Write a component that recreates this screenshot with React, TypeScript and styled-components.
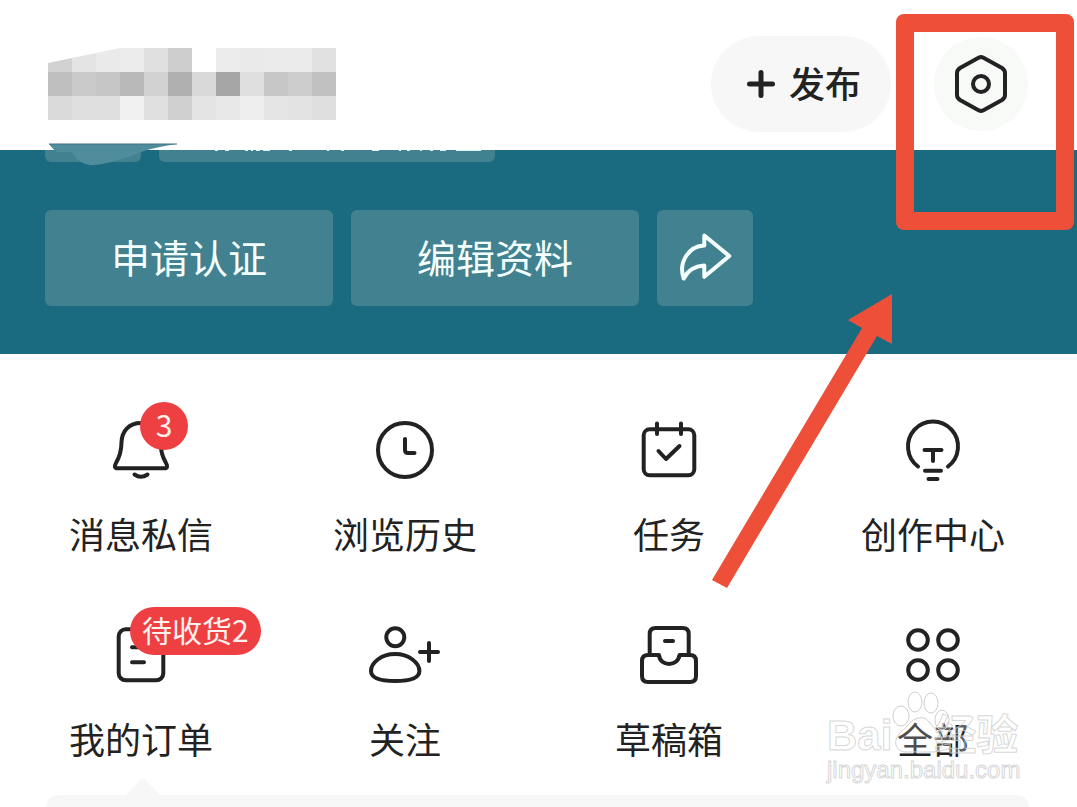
import React from 'react';
import styled, { createGlobalStyle } from 'styled-components';

const INK = '#222222';
const TEAL = '#1b6b80';
const TILE = '#42818f';
const RED = '#ee4043';
const MARK = '#ed4f39';

const GlobalStyle = createGlobalStyle`
  * { box-sizing: border-box; }
  body {
    margin: 0;
    background: #ffffff;
    color: ${INK};
    font-family: 'Noto Sans CJK SC', 'Noto Sans', sans-serif;
  }
  button { font: inherit; color: inherit; border: 0; margin: 0; padding: 0; cursor: pointer; }
`;

const Page = styled.main`
  position: relative;
  display: flex;
  flex-direction: column;
  min-height: 100vh;
  overflow: hidden;
`;

const Header = styled.header`
  display: flex;
  align-items: center;
  gap: 43px;
  padding: 36px 49px 18px 48px;
`;

const HiddenName = styled.svg`
  display: block;
  width: 288px;
  height: 72px;
  margin-right: auto;
`;

const PublishButton = styled.button`
  display: flex;
  align-items: center;
  gap: 14px;
  height: 96px;
  padding: 0 30px 0 36px;
  border-radius: 48px;
  background: #f7f7f7;
  font-size: 36px;
  line-height: 42px;
  font-weight: 500;
`;

const ButtonText = styled.span`
  display: block;
  padding-bottom: 4px;
`;

const SettingsButton = styled.button`
  display: grid;
  place-items: center;
  width: 94px;
  height: 94px;
  border-radius: 50%;
  background: #f8faf8;
`;

const Profile = styled.section`
  padding: 0 45px 48px;
  background: ${TEAL};
`;

const TagRow = styled.div`
  display: flex;
  gap: 18px;
  margin-bottom: 48px;
`;

const Tag = styled.div<{ $width: number }>`
  width: ${(p) => p.$width}px;
  height: 12px;
  border-radius: 0 0 6px 6px;
  background: ${TILE};
`;

const TagText = styled.svg`
  display: block;
  width: 100%;
  height: 2px;
`;

const Actions = styled.div`
  display: flex;
  gap: 18px;
`;

const ActionButton = styled.button<{ $square?: boolean }>`
  display: grid;
  place-items: center;
  width: ${(p) => (p.$square ? 96 : 288)}px;
  height: 96px;
  border-radius: 6px;
  background: ${TILE};
  color: #f4ffff;
  font-size: 39px;
  line-height: 42px;
`;

const Menu = styled.nav`
  display: grid;
  grid-template-columns: repeat(4, 1fr);
  row-gap: 65px;
  padding: 60px 12px 36px 9px;
`;

const MenuItem = styled.button`
  display: flex;
  flex-direction: column;
  align-items: center;
  gap: 26px;
  background: none;
  font-size: 36px;
  line-height: 42px;
`;

const IconSlot = styled.span`
  position: relative;
  display: block;
  width: 72px;
  height: 72px;
`;

const Badge = styled.span<{ $left: number }>`
  position: absolute;
  top: -12px;
  left: ${(p) => p.$left}px;
  min-width: 48px;
  padding: 0 12px 4px;
  border-radius: 24px;
  background: ${RED};
  color: #fff1ee;
  font-size: 30px;
  line-height: 44px;
  text-align: center;
  white-space: nowrap;
`;

const Card = styled.section`
  position: relative;
  flex: 1;
  min-height: 12px;
  margin: 0 48px 0 46px;
  border-radius: 18px 18px 0 0;
  background: #f7f7f7;
`;

const CardPointer = styled.svg`
  position: absolute;
  left: 80px;
  bottom: 100%;
  width: 34px;
  height: 17px;
`;

const Smudge = styled.svg`
  position: absolute;
  left: 45px;
  top: 143px;
  width: 140px;
  height: 24px;
`;

const HighlightBox = styled.div`
  position: absolute;
  top: 14px;
  right: 3px;
  width: 178px;
  height: 216px;
  border: 18px solid ${MARK};
  border-radius: 8px;
  pointer-events: none;
`;

const Arrow = styled.svg`
  position: absolute;
  top: 290px;
  right: 177px;
  width: 190px;
  height: 300px;
  pointer-events: none;
`;

const Watermark = styled.div`
  position: absolute;
  right: 56px;
  top: 690px;
  width: 194px;
  color: rgba(255, 255, 255, 0.3);
  -webkit-text-stroke: 1px rgba(205, 205, 205, 0.8);
  font-family: 'Liberation Sans', 'Noto Sans CJK SC', sans-serif;
  white-space: nowrap;
  pointer-events: none;
`;

const Brand = styled.div`
  display: flex;
  align-items: flex-end;
  height: 66px;
  font-size: 42px;
  line-height: 40px;
  font-weight: 700;
`;

const Paw = styled.svg`
  flex: none;
  width: 58px;
  height: 66px;
  margin-right: -16px;
`;

const Url = styled.div`
  font-size: 24px;
  line-height: 28px;
`;

const Glyph = ({ children, size = 72, width = 4 }: { children: React.ReactNode; size?: number; width?: number }) => (
  <svg
    width={size}
    height={size}
    viewBox={`0 0 ${size} ${size}`}
    fill="none"
    stroke="currentColor"
    strokeWidth={width}
    strokeLinecap="round"
    strokeLinejoin="round"
    display="block"
    aria-hidden="true"
  >
    {children}
  </svg>
);

const icons = {
  bell: (
    <>
      <path d="M36 9C24 9 17 17 16.500 28C16.500 38 14.500 43 11 49Q8 54.300 13 54.300H59Q64 54.300 61 49C57.500 43 55.500 38 55.500 28C55 17 48 9 36 9Z" />
      <path d="M29.500 60.500Q36 65 42.500 60.500" />
    </>
  ),
  clock: (
    <>
      <circle cx="36" cy="36" r="27" />
      <path d="M36 25V36Q36 39 39 39H45.500" />
    </>
  ),
  task: (
    <>
      <rect x="10.700" y="15.300" width="50.600" height="46" rx="6" />
      <path d="M24 9.500V20M48 9.500V20M25.500 37L33 45L46.500 32" />
    </>
  ),
  bulb: (
    <>
      <path d="M21 52.500A25 25 0 1 1 51 52.500" />
      <path d="M27.500 36H44.500M36 36V47M28 56.700H44M31.500 65H40.500" />
    </>
  ),
  order: (
    <>
      <rect x="13.700" y="10.300" width="44.600" height="51" rx="7" />
      <path d="M27 28.300H44M27 43.300H39" />
    </>
  ),
  follow: (
    <>
      <circle cx="26.300" cy="18.300" r="9" />
      <path d="M26.200 35C12 35 2 44 2 52C2 59 12 62 26.200 62S50.400 59 50.400 52C50.400 44 40 35 26.200 35Z" />
      <path d="M51 33H69M60 24V42" />
    </>
  ),
  draft: (
    <>
      <path d="M16.700 35V15Q16.700 9 22.700 9H49.700Q55.700 9 55.700 15V35" />
      <path d="M15 36H26C27 48 45 48 46.500 36H57Q63 36 63 42V57Q63 63 57 63H15Q9 63 9 57V42Q9 36 15 36Z" />
      <path d="M32 22H40" />
    </>
  ),
  all: (
    <>
      <circle cx="21" cy="21" r="9.800" />
      <circle cx="51" cy="21" r="9.800" />
      <circle cx="21" cy="51" r="9.800" />
      <circle cx="51" cy="51" r="9.800" />
    </>
  ),
};

const menu: { label: string; icon: keyof typeof icons; badge?: string; badgeLeft?: number }[] = [
  { label: '消息私信', icon: 'bell', badge: '3', badgeLeft: 35 },
  { label: '浏览历史', icon: 'clock' },
  { label: '任务', icon: 'task' },
  { label: '创作中心', icon: 'bulb' },
  { label: '我的订单', icon: 'order', badge: '待收货2', badgeLeft: 25 },
  { label: '关注', icon: 'follow' },
  { label: '草稿箱', icon: 'draft' },
  { label: '全部', icon: 'all' },
];

// Grey levels of the pixelated user name, one list per row of cells.
const mosaic = [
  ['d2d2d2', 'e4e4e4', 'eaeaea', 'ececec', 'e0e0e0', 'cecece', 'ffffff', 'ececec', 'eaeaea', 'ebebeb', 'ebebeb', 'e1e1e1'],
  ['bfbfbf', 'cacaca', 'c6c6c6', 'b9b9b9', 'd2d2d2', 'b0b0b0', 'd9d9d9', 'a6a6a6', 'dfdfdf', 'c7c7c7', 'cccccc', 'c1c1c1'],
  ['dadada', 'dfdfdf', 'dedede', 'f1f1f1', 'e0e0e0', 'd0d0d0', 'e4e4e4', 'e8e8e8', 'eeeeee', 'e5e5e5', 'e3e3e3', 'dedede'],
];

export default function App() {
  return (
    <Page>
      <GlobalStyle />
      <Header>
        <HiddenName viewBox="0 0 288 72" shapeRendering="crispEdges" aria-hidden="true">
          {mosaic.map((row, y) =>
            row.map((tone, x) => (
              <rect key={`${x}-${y}`} x={x * 24} y={y * 24} width="24" height="24" fill={`#${tone}`} />
            )),
          )}
          <path d="M0 0H72L0 15Z" fill="#ffffff" shapeRendering="auto" />
        </HiddenName>
        <PublishButton type="button">
          <Glyph size={28} width={5}>
            <path d="M2.500 14H25.500M14 2.500V25.500" />
          </Glyph>
          <ButtonText>发布</ButtonText>
        </PublishButton>
        <SettingsButton type="button" aria-label="设置">
          <Glyph>
            <path d="M38 9.600L57 20Q60 22 60 25V47Q60 50 57 52L38 62.400Q36 63.400 34 62.400L15 52Q12 50 12 47V25Q12 22 15 20L34 9.600Q36 8.600 38 9.600Z" />
            <circle cx="36" cy="36" r="8" />
          </Glyph>
        </SettingsButton>
      </Header>

      <Profile>
        <TagRow>
          <Tag $width={96} />
          <Tag $width={336}>
            <TagText viewBox="0 0 336 2" aria-hidden="true">
              <path
                d="M56 .5h3M66 .5h4M86 .5h3M92 .5h2M97 .5h4M104 .5h7M130 .5h3M168 .5h2M182 .5h3M213 .5h7M240 .5h2M248 .5h3M261 .5h2M271 .5h3M281 .5h6M297 .5h25"
                stroke="#dff0f2"
              />
            </TagText>
          </Tag>
        </TagRow>
        <Actions>
          <ActionButton type="button">
            <ButtonText>申请认证</ButtonText>
          </ActionButton>
          <ActionButton type="button">
            <ButtonText>编辑资料</ButtonText>
          </ActionButton>
          <ActionButton type="button" $square aria-label="分享">
            <Glyph size={60}>
              <path d="M29.300 7.500L54.300 28L29.300 48.800V37.500C20 38 13 42 8.700 50.500C3 34 14 18 29.300 17.500Z" />
            </Glyph>
          </ActionButton>
        </Actions>
      </Profile>

      <Menu>
        {menu.map((item) => (
          <MenuItem key={item.label} type="button">
            <IconSlot>
              <Glyph>{icons[item.icon]}</Glyph>
              {item.badge && <Badge $left={item.badgeLeft ?? 0}>{item.badge}</Badge>}
            </IconSlot>
            {item.label}
          </MenuItem>
        ))}
      </Menu>

      <Card>
        <CardPointer viewBox="0 0 34 17" aria-hidden="true">
          <path d="M0 17L14 2Q17 0 20 2L34 17Z" fill="#f7f7f7" />
        </CardPointer>
      </Card>

      <Smudge viewBox="0 0 140 24" aria-hidden="true">
        <path d="M4 1H132Q112 4 99 8Q75 18 57 21Q44 24 36 19Q29 15 27 9H13Q7 6 4 1Z" fill="#4f8c9c" />
        <path d="M4 1H132" stroke="#45717d" />
      </Smudge>

      <HighlightBox />
      <Arrow viewBox="0 0 190 300" aria-hidden="true">
        <path d="M182 4L138 30L152 38L2 290L17 298L167 46L182 54Z" fill={MARK} />
      </Arrow>

      <Watermark aria-hidden="true">
        <Brand>
          Bai
          <Paw viewBox="0 0 58 66" fill="#ffffff" fillOpacity="0.2" stroke="#cfcfcf">
            <ellipse cx="9" cy="26" rx="8" ry="10" />
            <ellipse cx="23" cy="12" rx="7" ry="10" />
            <ellipse cx="39" cy="13" rx="7" ry="10" />
            <ellipse cx="50" cy="30" rx="7" ry="10" />
            <path d="M27 28C35 26 38 34 44 40C54 49 52 62 41 62H14C3 62 0 50 9 42C16 36 19 29 27 28Z" />
          </Paw>
          经验
        </Brand>
        <Url>jingyan.baidu.com</Url>
      </Watermark>
    </Page>
  );
}
